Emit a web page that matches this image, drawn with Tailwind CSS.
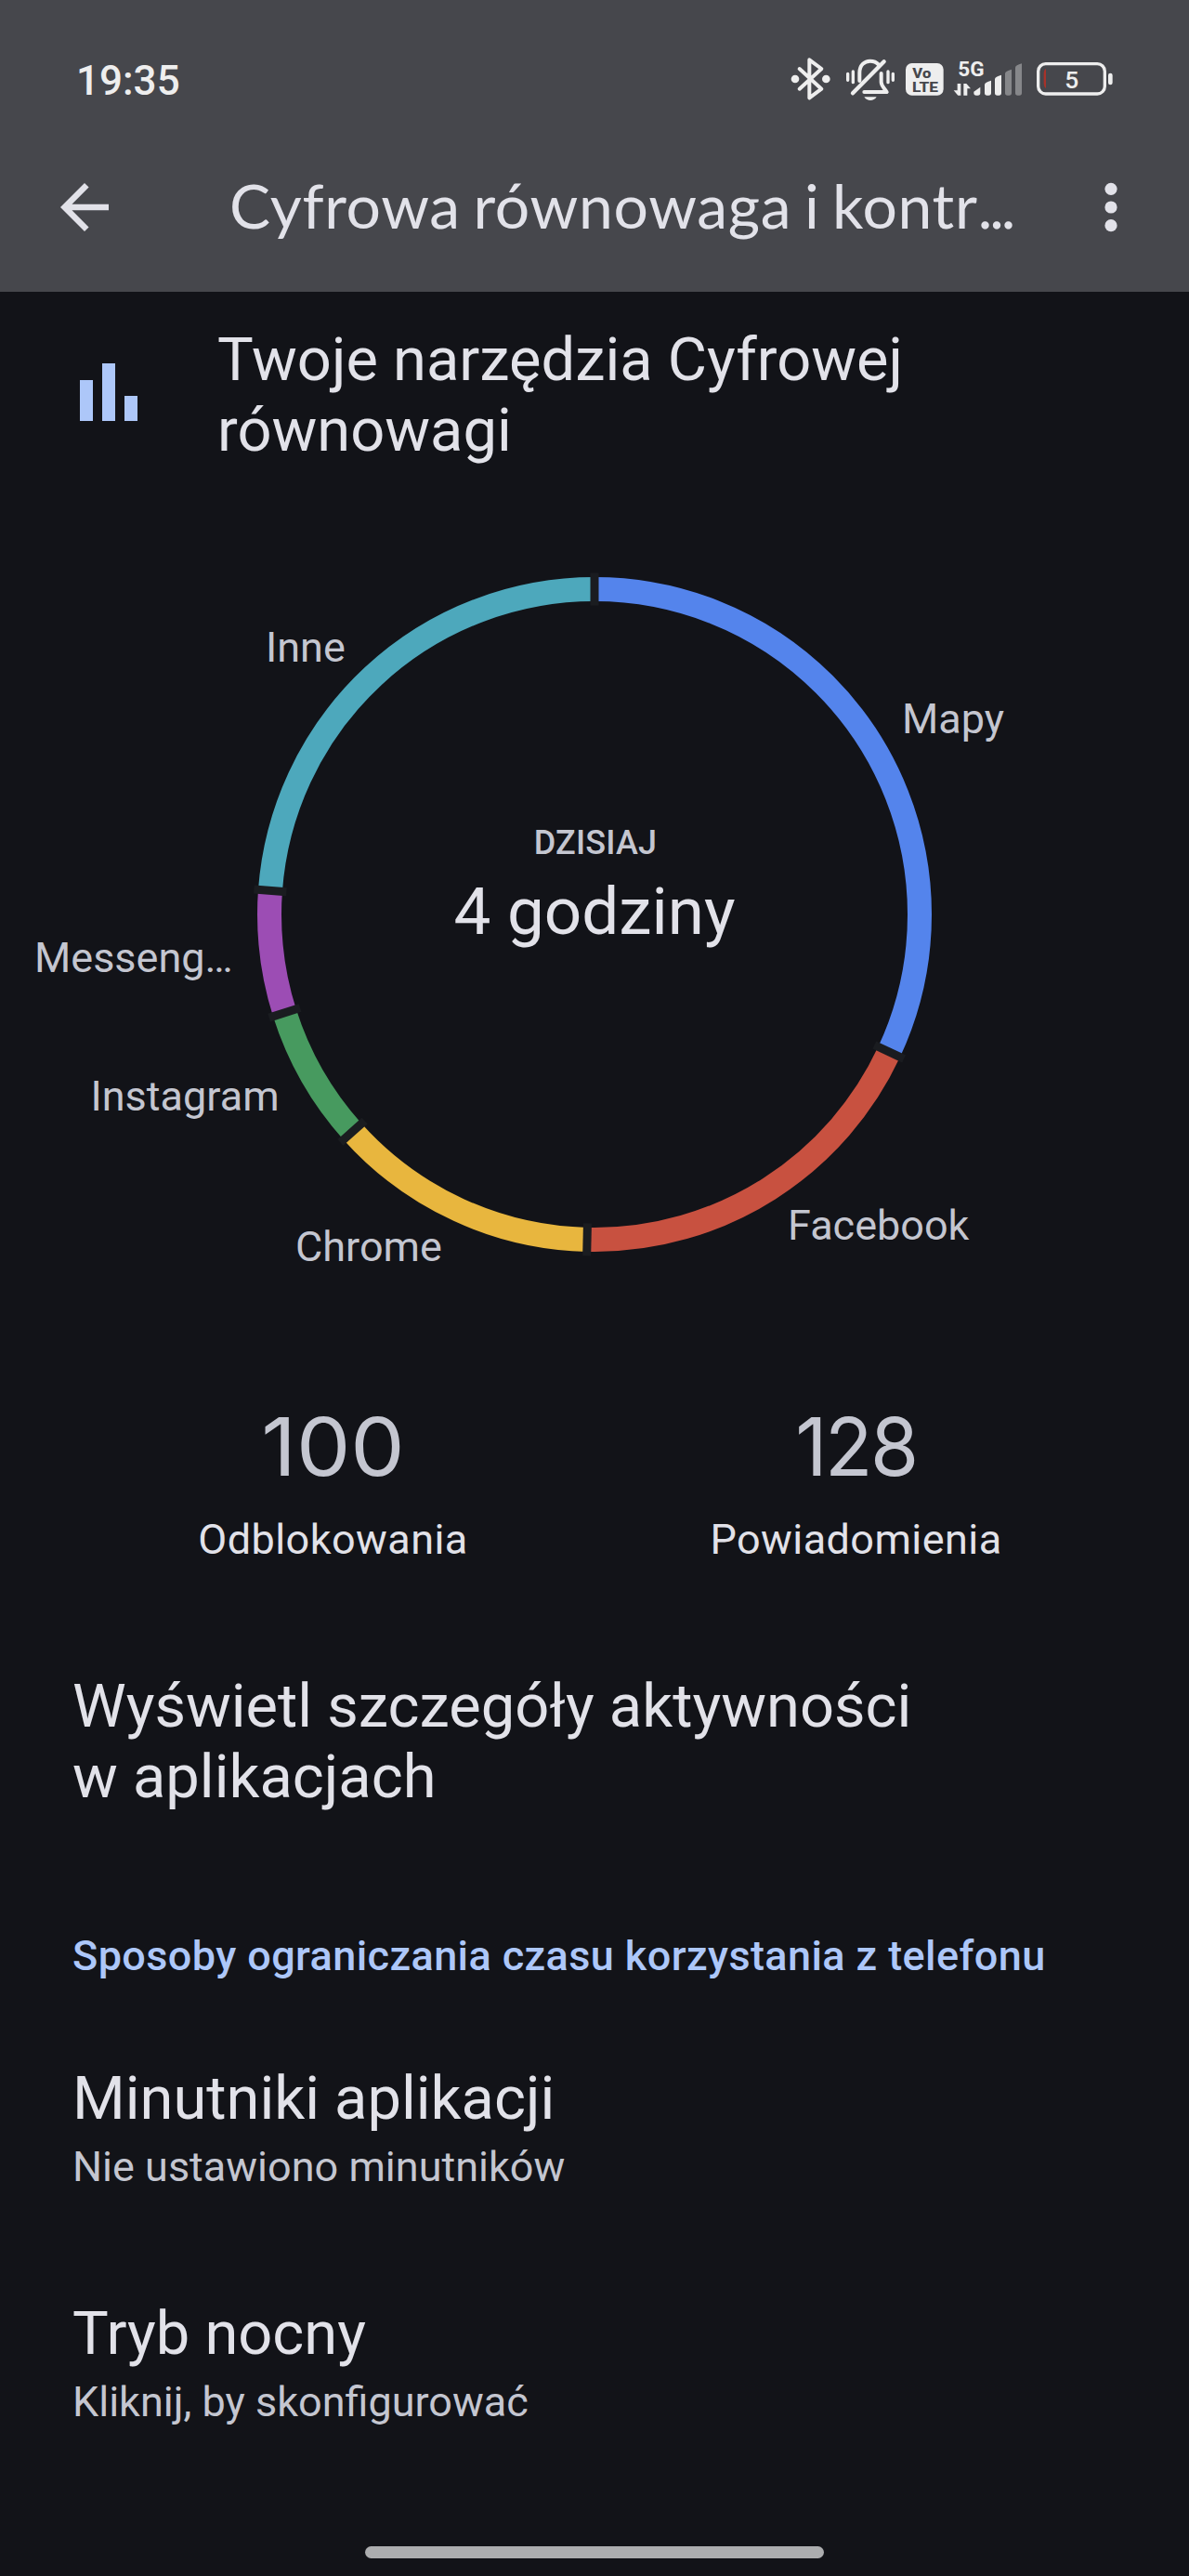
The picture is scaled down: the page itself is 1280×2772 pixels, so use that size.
<!DOCTYPE html>
<html lang="pl">
<head>
    <meta charset="UTF-8">
    <meta name="viewport" content="width=device-width, initial-scale=1.0">
    <title>Cyfrowa równowaga i kontrola rodzicielska</title>
    <!-- Tailwind CSS CDN -->
    <script src="https://cdn.jsdelivr.net/npm/@tailwindcss/browser@4"></script>
</head>
<body class="w-[1280px] h-[2772px] overflow-hidden bg-[#121318] font-['Roboto',sans-serif] text-[#e2e2e9]">

    <header class="h-[314px] bg-[#46474c]">
        <!-- Pasek stanu -->
        <div class="h-[134px] pt-[50px] pl-[82px] pr-20 flex items-start justify-between text-[#eeeeee]">
            <span class="mt-[15px] text-[44px] leading-[44px] font-medium">19:35</span>
            <div class="flex">
                <!-- Bluetooth -->
                <svg class="w-[55px] h-[70px]" viewBox="60 0 165 210" fill="none" stroke="currentColor" stroke-width="12" stroke-linecap="round" stroke-linejoin="round">
                    <path d="M92 72L163 137L124 166V43L163 72L92 137" />
                    <circle cx="78" cy="105" r="13" fill="currentColor" stroke="none" />
                    <circle cx="178" cy="105" r="13" fill="currentColor" stroke="none" />
                </svg>
                <!-- Wyciszony dzwonek -->
                <svg class="w-[65px] h-[70px]" viewBox="225 0 195 210" fill="none" stroke="currentColor" stroke-width="12" stroke-linecap="round" stroke-linejoin="round">
                    <path d="M286 111V85C286 60 302 47 320 47C332 47 341 51 347 58" />
                    <path d="M264 151L365 49" stroke-width="13" />
                    <path d="M356 87V115C356 127 364 132 374 147H301" />
                    <path d="M301 163H341C336 171 329 174 321 174C313 174 306 171 301 163Z" fill="currentColor" stroke="none" />
                    <path d="M248 88V109M265 81V116M378 81V116M394 88V109" stroke-width="10" />
                </svg>
                <!-- VoLTE -->
                <svg class="w-[50px] h-[70px]" viewBox="420 0 150 210">
                    <rect x="435" y="54" width="122" height="104" rx="20" fill="currentColor" />
                    <text x="457" y="102" font-size="43" font-weight="800" textLength="60" lengthAdjust="spacingAndGlyphs" fill="#46474c">Vo</text>
                    <text x="456" y="146" font-size="45" font-weight="800" textLength="84" lengthAdjust="spacingAndGlyphs" fill="#46474c">LTE</text>
                </svg>
                <!-- Zasięg 5G -->
                <svg class="w-[90px] h-[70px]" viewBox="570 0 270 210" fill="currentColor">
                    <text x="604" y="96" font-size="67" font-weight="700" textLength="85" lengthAdjust="spacingAndGlyphs">5G</text>
                    <path d="M602 120H613V158H604L590 142H602ZM622 120H631L645 136H634V158H622Z" />
                    <path d="M655 146L676 131V150Q676 158 668 158H663Q655 158 655 150Z" />
                    <path d="M690 122Q691 116 711 110V150Q711 158 703 158H698Q690 158 690 150Z" />
                    <path d="M723 105Q724 97 744 92V150Q744 158 736 158H731Q723 158 723 150Z" />
                    <path d="M756 87Q757 79 777 74V150Q777 158 769 158H764Q756 158 756 150Z" opacity=".38" />
                    <path d="M789 68Q790 60 810 55V150Q810 158 802 158H797Q789 158 789 150Z" opacity=".38" />
                </svg>
                <!-- Bateria -->
                <svg class="w-[90px] h-[70px]" viewBox="840 0 270 210">
                    <rect x="863" y="56" width="215" height="97" rx="24" fill="none" stroke="currentColor" stroke-width="10" />
                    <rect x="1089" y="86" width="14" height="38" rx="7" fill="currentColor" />
                    <path d="M888 71V136Q881 130 881 120V86Q881 76 888 71Z" fill="#a8322a" />
                    <text x="971" y="134" font-size="79" font-weight="500" text-anchor="middle" fill="currentColor">5</text>
                </svg>
            </div>
        </div>

        <!-- Pasek aplikacji -->
        <div class="h-[178px] pl-[52px] pr-[74px] flex items-center">
            <svg class="w-[78px] h-[78px]" viewBox="0 0 24 24" fill="currentColor">
                <path d="M20 11H7.83l5.59-5.59L12 4l-8 8 8 8 1.41-1.41L7.83 13H20v-2z" />
            </svg>
            <h1 class="ml-[117px] pb-1 flex-1 whitespace-nowrap font-['Lato',sans-serif] text-[66px] leading-[80px] tracking-[0.7px] [word-spacing:-4px]">Cyfrowa równowaga i kontr<span class="tracking-[-3px]">...</span></h1>
            <svg class="w-5 h-[54px]" viewBox="0 0 20 54" fill="currentColor">
                <circle cx="10" cy="7.3" r="6.6" />
                <circle cx="10" cy="27" r="6.6" />
                <circle cx="10" cy="46.7" r="6.6" />
            </svg>
        </div>
    </header>

    <main>
        <section class="pt-[35px] pl-[86px] flex items-start">
            <svg class="mt-[42px] w-[62px] h-[62px]" viewBox="0 0 62 62" fill="#adc7f9">
                <rect y="18" width="14" height="44" />
                <rect x="24" width="14" height="62" />
                <rect x="48" y="35" width="14" height="27" />
            </svg>
            <h2 class="ml-[86px] text-[65px] leading-[76px]">Twoje narzędzia Cyfrowej<br>równowagi</h2>
        </section>

        <!-- Wykres czasu w aplikacjach -->
        <svg class="block w-[1280px] h-[1006px]" viewBox="0 501 1280 1006">
            <g transform="rotate(-90 640 984)" fill="none" stroke-width="26">
                <circle cx="640" cy="984" r="350" pathLength="360" stroke="#5484ec" stroke-dasharray="115 360" />
                <circle cx="640" cy="984" r="350" pathLength="360" stroke="#c85140" stroke-dasharray="66.3 360" stroke-dashoffset="-115" />
                <circle cx="640" cy="984" r="350" pathLength="360" stroke="#e8b63e" stroke-dasharray="46.8 360" stroke-dashoffset="-181.3" />
                <circle cx="640" cy="984" r="350" pathLength="360" stroke="#479a5f" stroke-dasharray="24.3 360" stroke-dashoffset="-228.1" />
                <circle cx="640" cy="984" r="350" pathLength="360" stroke="#9c4db4" stroke-dasharray="21.8 360" stroke-dashoffset="-252.4" />
                <circle cx="640" cy="984" r="350" pathLength="360" stroke="#4da8bc" stroke-dasharray="85.8 360" stroke-dashoffset="-274.2" />
            </g>
            <g stroke="#1a1c20" stroke-width="9">
                <path d="M640 616.5v35" />
                <path d="M640 616.5v35" transform="rotate(115 640 984)" />
                <path d="M640 616.5v35" transform="rotate(181.3 640 984)" />
                <path d="M640 616.5v35" transform="rotate(228.1 640 984)" />
                <path d="M640 616.5v35" transform="rotate(252.4 640 984)" />
                <path d="M640 616.5v35" transform="rotate(274.2 640 984)" />
            </g>
            <g font-size="45" fill="#c4c6d0">
                <text x="286" y="712">Inne</text>
                <text x="971" y="789">Mapy</text>
                <text x="37" y="1046">Messeng…</text>
                <text x="97.5" y="1195">Instagram</text>
                <text x="318" y="1357">Chrome</text>
                <text x="848" y="1334">Facebook</text>
            </g>
            <text x="641" y="919" font-size="36" font-weight="500" letter-spacing=".2" text-anchor="middle" fill="#c4c6d0">DZISIAJ</text>
            <text x="640" y="1005" font-size="71" text-anchor="middle" fill="#e2e2e9">4 godziny</text>
        </svg>

        <section class="px-[77px] grid grid-cols-2 text-center">
            <div>
                <p class="font-['Inter',sans-serif] text-[87px] leading-[100px] scale-x-[1.065] text-[#c4c6d0]">100</p>
                <p class="mt-5 text-[45px] leading-[60px] tracking-[0.43px]">Odblokowania</p>
            </div>
            <div>
                <p class="font-['Inter',sans-serif] text-[87px] leading-[100px] tracking-[-2.5px] scale-x-[0.97] text-[#c4c6d0]">128</p>
                <p class="mt-5 text-[45px] leading-[60px] tracking-[0.43px]">Powiadomienia</p>
            </div>
        </section>

        <section class="pl-[78px] mt-[111px]">
            <h2 class="text-[65px] leading-[76px]">Wyświetl szczegóły aktywności<br>w aplikacjach</h2>
            <h3 class="mt-[125px] text-[45px] leading-[60px] font-medium tracking-[0.4px] text-[#adc7f9]">Sposoby ograniczania czasu korzystania z telefonu</h3>

            <div class="mt-[85px]">
                <h2 class="text-[65px] leading-[76px]">Minutniki aplikacji</h2>
                <p class="mt-[9px] text-[45px] leading-[54px] text-[#c4c6d0]">Nie ustawiono minutników</p>
            </div>
            <div class="mt-[114px]">
                <h2 class="text-[65px] leading-[76px]">Tryb nocny</h2>
                <p class="mt-[9px] text-[45px] leading-[54px] text-[#c4c6d0]">Kliknij, by skonfigurować</p>
            </div>
        </section>
    </main>

    <!-- Pasek gestów -->
    <div class="mt-[128px] mx-auto w-[494px] h-[13px] rounded-full bg-[#acadaf]"></div>
</body>
</html>
